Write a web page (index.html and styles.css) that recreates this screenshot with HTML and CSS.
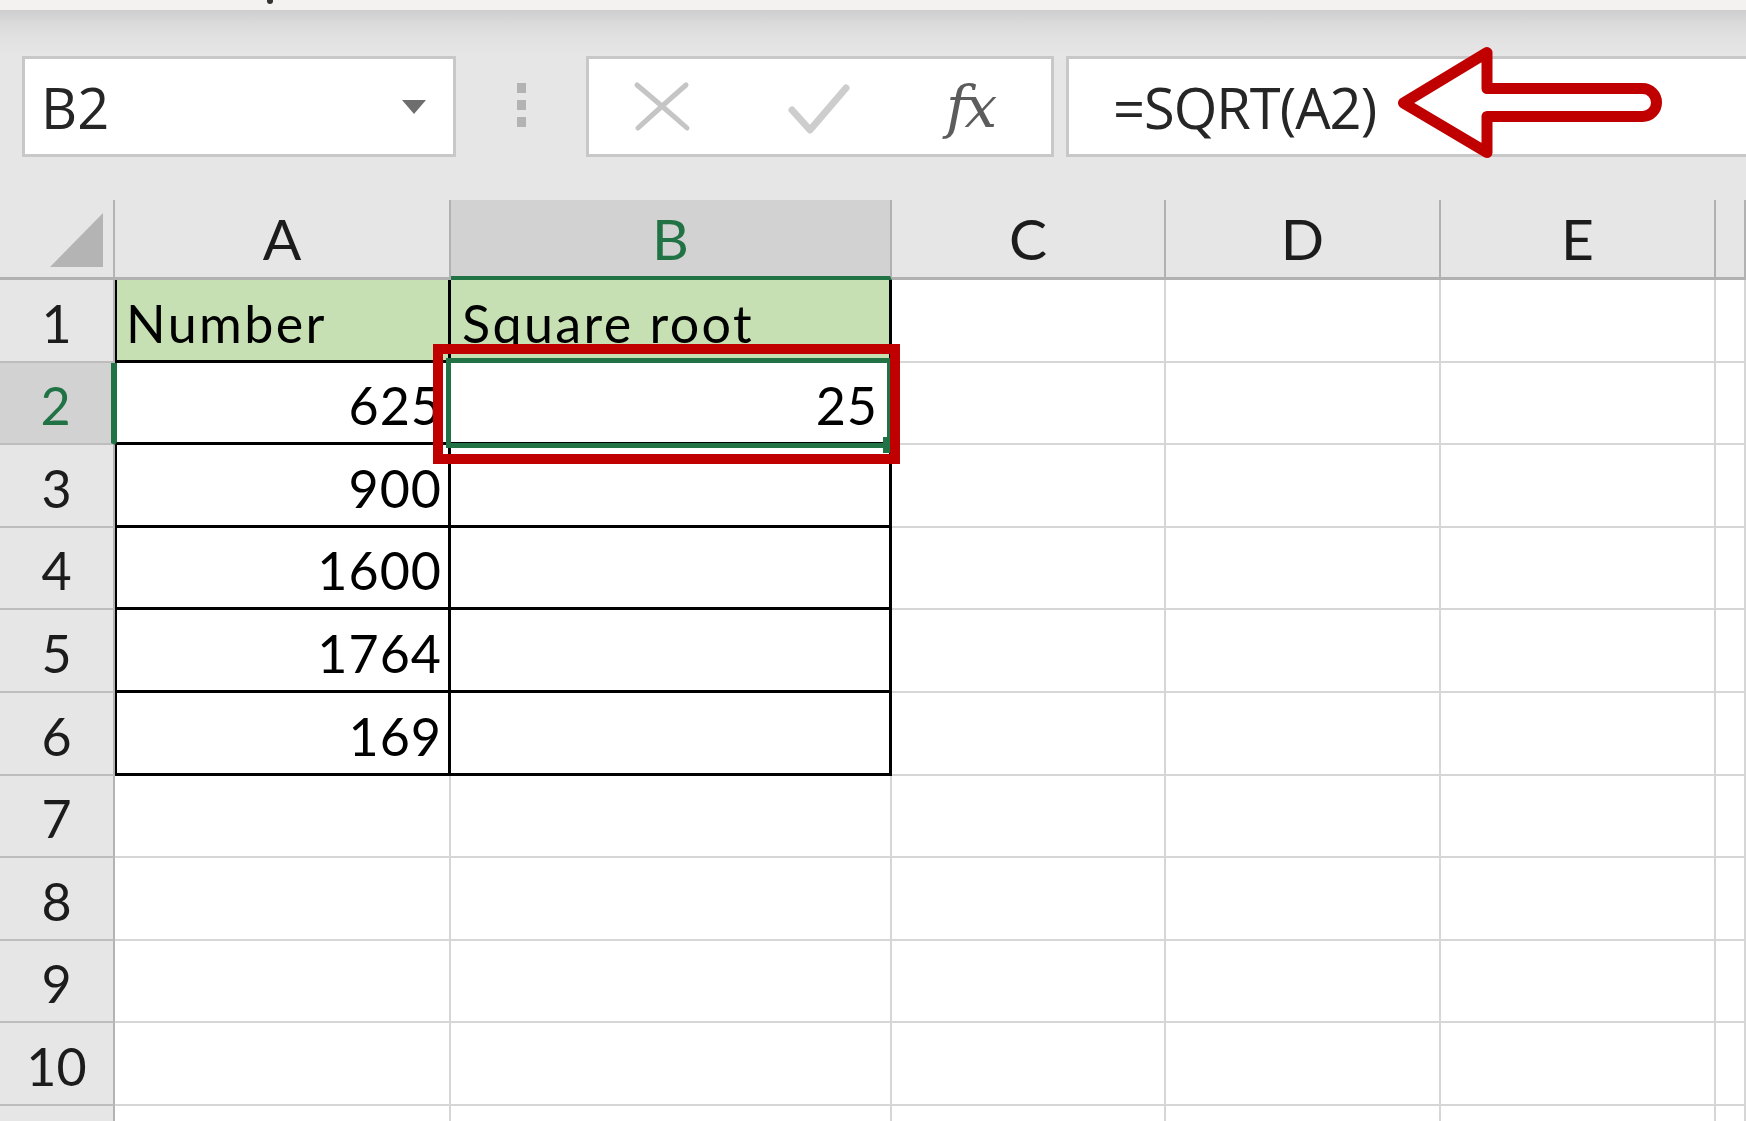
FILE: index.html
```html
<!DOCTYPE html>
<html lang="en">
<head>
<meta charset="utf-8">
<title>SQRT example</title>
<link rel="stylesheet" href="styles.css">
</head>
<body>
<div class="app">
  <div class="ribbon-edge"><span class="ribbon-glyph"></span></div>

  <div class="formula-bar">
    <div class="name-box">
      <span class="name-text">B2</span>
      <span class="name-caret"></span>
    </div>
    <div class="grip"><span></span><span></span><span></span></div>
    <div class="fx-buttons">
      <svg class="icon-cancel" width="58" height="51" viewBox="0 0 58 51">
        <path d="M4 4 Q28 24 54 47 M53 4 Q30 24 5 47" fill="none" stroke="#c5c5c5" stroke-width="5" stroke-linecap="round"/>
      </svg>
      <svg class="icon-enter" width="62" height="52" viewBox="0 0 62 52">
        <path d="M4 26 L22 46 L58 4" fill="none" stroke="#cdcdcd" stroke-width="7" stroke-linecap="round" stroke-linejoin="round"/>
      </svg>
      <span class="fx-label">fx</span>
    </div>
    <div class="formula-input">=SQRT(A2)</div>
  </div>

  <div class="sheet">
    <div class="corner"><span class="corner-tri"></span></div>
    <div class="col-head">A</div>
    <div class="col-head is-active">B</div>
    <div class="col-head">C</div>
    <div class="col-head">D</div>
    <div class="col-head">E</div>
    <div class="col-head"></div>

    <div class="row-head">1</div>
    <div class="cell boxed first-col header-fill">Number</div>
    <div class="cell boxed header-fill b-text">Square root</div>
    <div class="cell"></div><div class="cell"></div><div class="cell"></div><div class="cell"></div>

    <div class="row-head is-active">2</div>
    <div class="cell boxed first-col num active-row">625</div>
    <div class="cell boxed num active-cell">25<span class="selection"></span><span class="fill-handle"></span></div>
    <div class="cell"></div><div class="cell"></div><div class="cell"></div><div class="cell"></div>

    <div class="row-head">3</div>
    <div class="cell boxed first-col num">900</div>
    <div class="cell boxed"></div>
    <div class="cell"></div><div class="cell"></div><div class="cell"></div><div class="cell"></div>

    <div class="row-head">4</div>
    <div class="cell boxed first-col num">1600</div>
    <div class="cell boxed"></div>
    <div class="cell"></div><div class="cell"></div><div class="cell"></div><div class="cell"></div>

    <div class="row-head">5</div>
    <div class="cell boxed first-col num">1764</div>
    <div class="cell boxed"></div>
    <div class="cell"></div><div class="cell"></div><div class="cell"></div><div class="cell"></div>

    <div class="row-head">6</div>
    <div class="cell boxed first-col num">169</div>
    <div class="cell boxed"></div>
    <div class="cell"></div><div class="cell"></div><div class="cell"></div><div class="cell"></div>

    <div class="row-head">7</div>
    <div class="cell"></div><div class="cell"></div><div class="cell"></div><div class="cell"></div><div class="cell"></div><div class="cell"></div>

    <div class="row-head">8</div>
    <div class="cell"></div><div class="cell"></div><div class="cell"></div><div class="cell"></div><div class="cell"></div><div class="cell"></div>

    <div class="row-head">9</div>
    <div class="cell"></div><div class="cell"></div><div class="cell"></div><div class="cell"></div><div class="cell"></div><div class="cell"></div>

    <div class="row-head">10</div>
    <div class="cell"></div><div class="cell"></div><div class="cell"></div><div class="cell"></div><div class="cell"></div><div class="cell"></div>

    <div class="row-head"></div>
    <div class="cell"></div><div class="cell"></div><div class="cell"></div><div class="cell"></div><div class="cell"></div><div class="cell"></div>

    <span class="annot-box"></span>
  </div>

  <svg class="callout-arrow" width="280" height="125" viewBox="0 0 280 125">
    <path d="M13.5 63 L97 12.5 L97 48.5 L252.5 48.5 A14 14 0 0 1 252.5 76.5 L97 76.5 L97 112.5 Z" fill="none" stroke="#c00000" stroke-width="11" stroke-linejoin="round"/>
  </svg>
</div>
</body>
</html>
```

FILE: styles.css
```css
html, body {
  margin: 0;
  padding: 0;
  background: #e6e6e6;
}

.app {
  position: relative;
  width: 1746px;
  height: 1121px;
  overflow: hidden;
  background: #e6e6e6;
  font-family: Lato, "Open Sans", sans-serif;
}

/* top edge of the ribbon */
.ribbon-edge {
  height: 10px;
  background: #f3f2f1;
  display: flex;
}
.ribbon-glyph {
  width: 6px;
  height: 4px;
  margin-left: 267px;
  background: #333;
  border-radius: 0 0 3px 3px;
}

/* formula bar */
.formula-bar {
  height: 190px;
  box-sizing: border-box;
  padding-top: 46px;
  display: flex;
  align-items: flex-start;
  background: linear-gradient(to bottom, #cecece 0px, #d9d9d9 12px, #e2e2e2 30px, #e6e6e6 46px);
}
.formula-bar > * {
  flex-shrink: 0;
}

.name-box {
  box-sizing: border-box;
  width: 434px;
  height: 101px;
  margin-left: 22px;
  border: 3px solid #c8c8c8;
  background: #fff;
  display: flex;
  align-items: center;
  justify-content: space-between;
  padding: 0 27px 0 16px;
}
.name-text {
  font-family: "Open Sans", sans-serif;
  font-size: 56px;
  line-height: 56px;
  color: #262626;
}
.name-caret {
  width: 0;
  height: 0;
  border-left: 12px solid transparent;
  border-right: 12px solid transparent;
  border-top: 14px solid #6e6e6e;
}

.grip {
  margin-left: 61px;
  margin-top: 27px;
  display: flex;
  flex-direction: column;
  gap: 7px;
}
.grip span {
  width: 9px;
  height: 10px;
  background: #b3b3b3;
}

.fx-buttons {
  box-sizing: border-box;
  width: 468px;
  height: 101px;
  margin-left: 60px;
  border: 3px solid #c8c8c8;
  background: #fff;
  display: flex;
  align-items: flex-start;
}
.icon-cancel {
  margin-left: 44px;
  margin-top: 22px;
  flex-shrink: 0;
}
.icon-enter {
  margin-left: 97px;
  margin-top: 25px;
  flex-shrink: 0;
}
.fx-label {
  margin-left: 96px;
  margin-top: 19px;
  font-family: "DejaVu Serif", "Liberation Serif", serif;
  font-style: italic;
  font-size: 58px;
  line-height: 58px;
  color: #5c5c5c;
  letter-spacing: -3px;
}

.formula-input {
  box-sizing: border-box;
  width: 720px;
  height: 101px;
  margin-left: 12px;
  border: 3px solid #c8c8c8;
  background: #fff;
  display: flex;
  align-items: center;
  padding-left: 44px;
  font-family: "Open Sans", sans-serif;
  font-size: 56px;
  line-height: 56px;
  color: #262626;
  letter-spacing: -1px;
}

/* worksheet grid */
.sheet {
  position: relative;
  display: grid;
  grid-template-columns: 115px 336px 441px 274px 275px 275px 30px;
  grid-template-rows: 80px repeat(11, 82.6px);
  height: 921px;
  overflow: hidden;
}

.corner {
  box-sizing: border-box;
  background: #e6e6e6;
  border-right: 2px solid #b4b4b4;
  border-bottom: 3px solid #b1b1b1;
  display: flex;
  align-items: flex-end;
  justify-content: flex-end;
  padding: 0 10px 10px 0;
}
.corner-tri {
  width: 53px;
  height: 54px;
  background: #b4b4b4;
  clip-path: polygon(100% 0, 100% 100%, 0 100%);
}

.col-head {
  box-sizing: border-box;
  background: #e6e6e6;
  border-right: 2px solid #b1b1b1;
  border-bottom: 3px solid #b1b1b1;
  display: flex;
  align-items: flex-end;
  justify-content: center;
  padding-bottom: 10px;
  font-size: 57px;
  line-height: 57px;
  color: #1c1c1c;
}
.col-head.is-active {
  background: #d2d2d2;
  color: #217346;
  border-bottom: 4px solid #217346;
  padding-bottom: 9px;
}

.row-head {
  box-sizing: border-box;
  background: #e6e6e6;
  border-right: 2px solid #b4b4b4;
  border-bottom: 2px solid #bdbdbd;
  display: flex;
  align-items: flex-end;
  justify-content: center;
  padding-bottom: 12px;
  font-size: 52px;
  line-height: 52px;
  color: #1c1c1c;
}
.row-head.is-active {
  background: #d2d2d2;
  color: #217346;
  border-right: 4px solid #217346;
}

.cell {
  box-sizing: border-box;
  background: #fff;
  border-right: 2px solid #d6d6d6;
  border-bottom: 2px solid #d6d6d6;
  display: flex;
  align-items: flex-end;
  padding: 0 7px 12px 9px;
  font-size: 52px;
  line-height: 52px;
  color: #000;
  white-space: nowrap;
  overflow: hidden;
  letter-spacing: 2.4px;
}
.cell.boxed {
  border-right: 3px solid #000;
  border-bottom: 3px solid #000;
  padding-bottom: 11px;
}
.cell.first-col {
  border-left: 2px solid #000;
}
.cell.first-col.active-row {
  border-left-color: #217346;
}
.cell.header-fill {
  background: #c6e0b4;
}
.cell.b-text {
  padding-left: 11px;
}
.cell.num {
  justify-content: flex-end;
  letter-spacing: 1px;
  padding-right: 6px;
}
.cell.active-cell {
  position: relative;
  overflow: visible;
  padding-right: 11px;
}

.selection {
  position: absolute;
  left: -5px;
  top: -5px;
  right: -3px;
  bottom: -6px;
  border: 5px solid #217346;
}
.fill-handle {
  position: absolute;
  left: 432px;
  top: 74px;
  width: 16px;
  height: 16px;
  background: #217346;
}

.annot-box {
  position: absolute;
  left: 433px;
  top: 144px;
  width: 467px;
  height: 120px;
  box-sizing: border-box;
  border: 10px solid #c00000;
}

.callout-arrow {
  position: absolute;
  left: 1390px;
  top: 40px;
}
```
